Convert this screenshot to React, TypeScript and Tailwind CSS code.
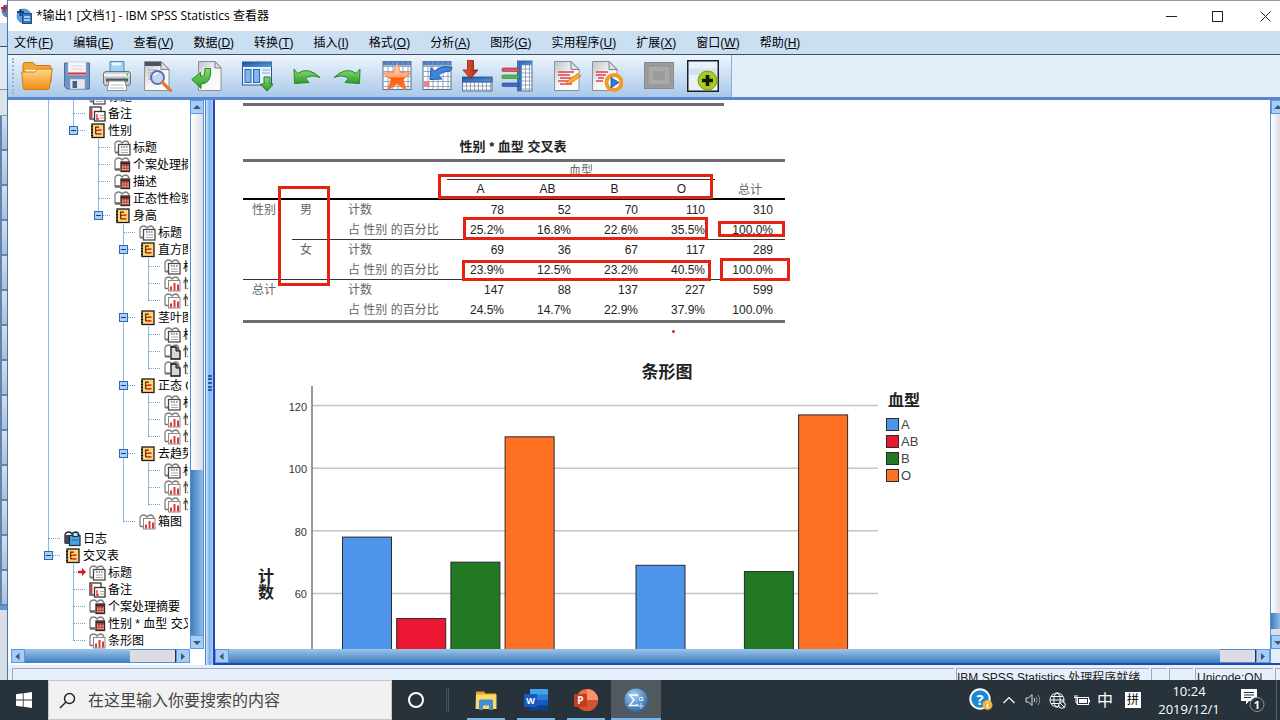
import type { ReactNode } from "react";

const UI_FONT = "font-['Liberation_Sans','Noto_Sans_CJK_SC',sans-serif]";
const WIN_FONT = "font-['Open_Sans','Noto_Sans_CJK_SC',sans-serif]";

const MENUS: [string, string][] = [
  ["文件", "F"],
  ["编辑", "E"],
  ["查看", "V"],
  ["数据", "D"],
  ["转换", "T"],
  ["插入", "I"],
  ["格式", "O"],
  ["分析", "A"],
  ["图形", "G"],
  ["实用程序", "U"],
  ["扩展", "X"],
  ["窗口", "W"],
  ["帮助", "H"],
];

/* ---------- toolbar icons ---------- */

function Gradients() {
  return (
    <svg width="0" height="0" className="absolute" aria-hidden="true">
      <defs>
        <linearGradient id="gFolder" x1="0" y1="0" x2="0" y2="1">
          <stop offset="0" stopColor="#ffd98a" />
          <stop offset="1" stopColor="#f08c14" />
        </linearGradient>
        <linearGradient id="gPaper" x1="0" y1="0" x2="1" y2="1">
          <stop offset="0" stopColor="#bfc3c8" />
          <stop offset="0.5" stopColor="#f4f5f6" />
          <stop offset="1" stopColor="#ffffff" />
        </linearGradient>
        <linearGradient id="gGreen" x1="0" y1="0" x2="0" y2="1">
          <stop offset="0" stopColor="#8fdc70" />
          <stop offset="1" stopColor="#2c9a2a" />
        </linearGradient>
        <linearGradient id="gBlue" x1="0" y1="0" x2="1" y2="1">
          <stop offset="0" stopColor="#1c4f9c" />
          <stop offset="1" stopColor="#5a9fe0" />
        </linearGradient>
        <linearGradient id="gStar" x1="0" y1="0" x2="0" y2="1">
          <stop offset="0" stopColor="#ffe9d8" />
          <stop offset="0.5" stopColor="#ffa468" />
          <stop offset="0.55" stopColor="#ff5a0a" />
          <stop offset="1" stopColor="#ff7a30" />
        </linearGradient>
        <linearGradient id="gRed" x1="0" y1="0" x2="1" y2="0">
          <stop offset="0" stopColor="#e06048" />
          <stop offset="1" stopColor="#b02410" />
        </linearGradient>
        <radialGradient id="gSpss" cx="0.4" cy="0.3" r="0.7">
          <stop offset="0" stopColor="#a9d0f2" />
          <stop offset="1" stopColor="#2f6fb4" />
        </radialGradient>
      </defs>
    </svg>
  );
}

function Icon({ children }: { children: ReactNode }) {
  return (
    <svg viewBox="0 0 32 32" className="h-8 w-8" aria-hidden="true">
      {children}
    </svg>
  );
}

function Grid({ x, y, w, h, step = 5, head = true }: { x: number; y: number; w: number; h: number; step?: number; head?: boolean }) {
  const cols = Array.from({ length: Math.floor((w - 1) / step) }, (_, i) => x + (i + 1) * step);
  const rows = Array.from({ length: Math.floor((h - 1) / step) }, (_, i) => y + (i + 1) * step);
  return (
    <g>
      <rect x={x} y={y} width={w} height={h} fill="#fff" stroke="#5d6f8c" />
      {head && <rect x={x} y={y} width={w} height="4" fill="#4f7fc4" />}
      {cols.map((c) => (
        <path key={`c${c}`} d={`M${c} ${y}V${y + h}`} stroke="#8b9cba" strokeWidth="0.9" />
      ))}
      {rows.map((r) => (
        <path key={`r${r}`} d={`M${x} ${r}H${x + w}`} stroke="#8b9cba" strokeWidth="0.9" />
      ))}
    </g>
  );
}

function Paper() {
  return (
    <g>
      <path d="M3.500 1.500H20l8 8V30.500H3.500Z" fill="url(#gPaper)" stroke="#8d9298" />
      <path d="M20 1.500v8h8Z" fill="#dfe2e5" stroke="#7b8086" />
    </g>
  );
}

const OpenIcon = (
  <Icon>
    <path d="M2 4.500q0-2 2-2h8l3 3h13q2 0 2 2V22H2Z" fill="#f5a632" stroke="#c9780f" />
    <path d="M4 9.500h25l-1 12H4Z" fill="#fff3d6" stroke="#dda64a" strokeWidth="0.8" />
    <path d="M.8 12h13l3-3h14.500l-3 19q-.3 1.500-2 1.500H4q-1.600 0-1.800-1.500Z" fill="url(#gFolder)" stroke="#d07d10" />
  </Icon>
);
const SaveIcon = (
  <Icon>
    <path d="M3.500 3h25v26H6l-2.500-2.500Z" fill="#6a93c8" stroke="#4a6fa5" />
    <rect x="7" y="2" width="18" height="13" fill="#f6f6f8" stroke="#b9bfca" strokeWidth="0.6" />
    <path d="M7 13.500h18" stroke="#e02a3c" strokeWidth="2" />
    <path d="M10 6h12M10 9h12" stroke="#d3d5da" />
    <rect x="9" y="19" width="15" height="10" fill="#e4e6ea" stroke="#9aa5b8" strokeWidth="0.6" />
    <rect x="11.500" y="21" width="4.500" height="7" fill="#3f5f92" />
  </Icon>
);
const PrintIcon = (
  <Icon>
    <path d="M9 13V1.500h14V13Z" fill="#9fd4f5" stroke="#4d8dbb" />
    <path d="M11 4h9" stroke="#e8f6ff" strokeWidth="3" />
    <rect x="2.500" y="11.500" width="27" height="14" rx="2.500" fill="#c6c8cb" stroke="#6f7377" />
    <path d="M3 15h26" stroke="#f5f5f5" strokeWidth="2.500" />
    <path d="M5 20h22" stroke="#55595e" strokeWidth="3" />
    <path d="M8 21h16l2 9.500H6Z" fill="#fff" stroke="#8a8e92" />
    <path d="M9.500 25h13M9 28h14" stroke="#b9bcc0" />
    <circle cx="26.500" cy="14.500" r="1" fill="#3fae3a" />
  </Icon>
);
const PreviewIcon = (
  <Icon>
    <Paper />
    <rect x="4" y="2" width="16" height="4" fill="#4a5360" />
    <path d="M7 10h9M7 13h6M7 16h5M7 19h5" stroke="#a8adb3" />
    <circle cx="16.500" cy="17.500" r="6.500" fill="#bcd0f0" fillOpacity="0.85" stroke="#5b74b0" strokeWidth="2" />
    <path d="M13 16q1-3 4-3" stroke="#fff" strokeWidth="1.500" fill="none" />
    <path d="M21.500 22.500l8 8" stroke="#e07b3a" strokeWidth="3.200" strokeLinecap="round" />
  </Icon>
);
const RecallIcon = (
  <Icon>
    <path d="M7.500 1.500H24l6 6.500V30.500H7.500Z" fill="url(#gPaper)" stroke="#8d9298" />
    <path d="M24 1.500V8h6Z" fill="#dfe2e5" stroke="#7b8086" />
    <path d="M.8 19.500L9.500 12.500v4q5 0 4.500-8h5.500q1.500 15-9.500 15.500v4.500Z" fill="url(#gGreen)" stroke="#1f8a2c" strokeLinejoin="round" />
  </Icon>
);
const DialogIcon = (
  <Icon>
    <rect x="1.500" y="2" width="29" height="23" fill="#e6f1fc" stroke="#2a5593" />
    <rect x="1.500" y="2" width="29" height="5" fill="url(#gBlue)" />
    <rect x="4" y="9.500" width="6" height="13" fill="#7fb6ee" stroke="#2d66b0" />
    <rect x="12.500" y="9.500" width="6" height="13" fill="#7fb6ee" stroke="#2d66b0" />
    <path d="M21 10h8M21 13h8" stroke="#90add0" />
    <path d="M23 17h6v7h3.500L26 31l-6.500-7H23Z" fill="url(#gGreen)" stroke="#1f7a22" strokeLinejoin="round" />
  </Icon>
);
const UndoIcon = (
  <Icon>
    <path d="M3 9l3.500 4.500Q17 6 29 17.500 20 14 14.500 18.500l3.500 4L3.500 23.500Z" fill="url(#gGreen)" stroke="#238a23" strokeLinejoin="round" />
  </Icon>
);
const RedoIcon = (
  <Icon>
    <path d="M29 9l-3.500 4.500Q15 6 3 17.500 12 14 17.500 18.500l-3.500 4 14.500 1Z" fill="url(#gGreen)" stroke="#238a23" strokeLinejoin="round" />
  </Icon>
);
const GotoCaseIcon = (
  <Icon>
    <Grid x={2} y={1.5} w={28} h={28} />
    <path d="M16 3l3.600 9.500 10.400.5-8 6.500 3.500 11L16 24l-9.500 6.500L10 19.500 2 13l10.400-.5Z" fill="url(#gStar)" stroke="#f07a35" strokeWidth="0.8" />
  </Icon>
);
const GotoVarIcon = (
  <Icon>
    <Grid x={2} y={1.5} w={28} h={28} />
    <rect x="2.500" y="21" width="6" height="5" fill="#f0808c" />
    <path d="M9 19.500L10 7.500l3.500 3.500Q22 4.500 31 7.500 31 11 26 11.500q-5 0-8.500 4l3.500 3.500Z" fill="#3f86d8" stroke="#1d59a8" strokeLinejoin="round" />
  </Icon>
);
const InsertCaseIcon = (
  <Icon>
    <Grid x={1.5} y={18} w={29.5} h={13} step={4} head={false} />
    <rect x="1.500" y="17" width="29.500" height="5" fill="url(#gBlue)" stroke="#234f92" strokeWidth="0.8" />
    <path d="M6.500 0h6v10h4.500L9.500 18.500 2 10h4.500Z" fill="url(#gRed)" stroke="#8a1c0c" strokeWidth="0.8" />
  </Icon>
);
const InsertVarIcon = (
  <Icon>
    <Grid x={16.500} y={1} w={14.500} h={30} step={4} head={false} />
    <rect x="16.500" y="1" width="14.500" height="4" fill="url(#gBlue)" />
    <rect x="16" y="1" width="4.500" height="30" fill="#3674bf" />
    <rect x="1" y="8" width="17" height="3.500" rx="1" fill="#e05561" stroke="#a32833" strokeWidth="0.6" />
    <rect x="1" y="15" width="17" height="3.500" rx="1" fill="#54b848" stroke="#2b7f25" strokeWidth="0.6" />
    <rect x="1" y="23" width="17" height="3.500" rx="1" fill="#4567cc" stroke="#263f96" strokeWidth="0.6" />
  </Icon>
);
const SyntaxIcon = (
  <Icon>
    <Paper />
    <path d="M7 12h16M7 15h12M9 18h12M7 21h15M9 24h12" stroke="#e2414a" strokeWidth="1.300" />
    <path d="M27 13.500l3 2.500-10 7-5 1 2.500-4Z" fill="#ffa733" stroke="#d46f14" strokeWidth="0.8" />
  </Icon>
);
const RunIcon = (
  <Icon>
    <g transform="translate(-2 0)">
      <Paper />
      <path d="M7 12h12M7 15h10M9 18h6M7 21h7" stroke="#e2414a" strokeWidth="1.300" />
    </g>
    <circle cx="23" cy="22.500" r="7.500" fill="#fff" stroke="#f29a22" strokeWidth="4" />
    <path d="M20 17.500l8 5-8 5.500Z" fill="#2f7fd0" stroke="#174f94" strokeWidth="0.8" />
  </Icon>
);
const DisabledIcon = (
  <Icon>
    <rect x="1.500" y="2.500" width="29" height="26" fill="#9c9c9c" stroke="#8a8a8a" />
    <rect x="5" y="6" width="22" height="19" fill="#a9a9a9" stroke="#8f8f8f" />
    <rect x="10" y="11" width="12" height="9" fill="#9c9c9c" />
  </Icon>
);
const DesignateIcon = (
  <Icon>
    <rect x="0.750" y="0.750" width="30.500" height="30.500" fill="#eaf2f9" stroke="#16222e" strokeWidth="1.500" />
    <path d="M2 8.500h28V15H2Z" fill="#d3e3f1" />
    <circle cx="20.500" cy="20.500" r="9.500" fill="#a9cb1e" stroke="#7e9a13" />
    <path d="M20.500 15v11M15 20.500h11" stroke="#151b0a" strokeWidth="3.600" />
  </Icon>
);

const TOOL_GROUPS: { label: string; icon: ReactNode }[][] = [
  [
    { label: "打开", icon: OpenIcon },
    { label: "保存", icon: SaveIcon },
    { label: "打印", icon: PrintIcon },
    { label: "打印预览", icon: PreviewIcon },
  ],
  [{ label: "导出", icon: RecallIcon }],
  [{ label: "重新调用对话框", icon: DialogIcon }],
  [
    { label: "撤销", icon: UndoIcon },
    { label: "重做", icon: RedoIcon },
  ],
  [
    { label: "转到数据", icon: GotoCaseIcon },
    { label: "转到个案", icon: GotoVarIcon },
    { label: "转到变量", icon: InsertCaseIcon },
    { label: "变量", icon: InsertVarIcon },
  ],
  [
    { label: "创建自动脚本", icon: SyntaxIcon },
    { label: "运行脚本", icon: RunIcon },
  ],
];

/* ---------- outline tree ---------- */

type NodeKind = "book" | "title" | "notes" | "table" | "chart" | "text" | "log";
type OutlineRow = { depth: number; kind: NodeKind; label: string; current?: boolean };

const OUTLINE: OutlineRow[] = [
  { depth: 1, kind: "title", label: "标题" },
  { depth: 1, kind: "notes", label: "备注" },
  { depth: 1, kind: "book", label: "性别" },
  { depth: 2, kind: "title", label: "标题" },
  { depth: 2, kind: "table", label: "个案处理摘要" },
  { depth: 2, kind: "table", label: "描述" },
  { depth: 2, kind: "table", label: "正态性检验" },
  { depth: 2, kind: "book", label: "身高" },
  { depth: 3, kind: "title", label: "标题" },
  { depth: 3, kind: "book", label: "直方图" },
  { depth: 4, kind: "title", label: "标题" },
  { depth: 4, kind: "chart", label: "性别= 男" },
  { depth: 4, kind: "chart", label: "性别= 女" },
  { depth: 3, kind: "book", label: "茎叶图" },
  { depth: 4, kind: "title", label: "标题" },
  { depth: 4, kind: "text", label: "性别= 男" },
  { depth: 4, kind: "text", label: "性别= 女" },
  { depth: 3, kind: "book", label: "正态 Q-Q 图" },
  { depth: 4, kind: "title", label: "标题" },
  { depth: 4, kind: "chart", label: "性别= 男" },
  { depth: 4, kind: "chart", label: "性别= 女" },
  { depth: 3, kind: "book", label: "去趋势正态 Q-Q 图" },
  { depth: 4, kind: "title", label: "标题" },
  { depth: 4, kind: "chart", label: "性别= 男" },
  { depth: 4, kind: "chart", label: "性别= 女" },
  { depth: 3, kind: "chart", label: "箱图" },
  { depth: 0, kind: "log", label: "日志" },
  { depth: 0, kind: "book", label: "交叉表" },
  { depth: 1, kind: "title", label: "标题", current: true },
  { depth: 1, kind: "notes", label: "备注" },
  { depth: 1, kind: "table", label: "个案处理摘要" },
  { depth: 1, kind: "table", label: "性别 * 血型 交叉表" },
  { depth: 1, kind: "chart", label: "条形图" },
];

// true when another row at this depth follows before the branch closes
function continues(index: number, depth: number) {
  for (let i = index + 1; i < OUTLINE.length; i++) {
    if (OUTLINE[i].depth === depth) return true;
    if (OUTLINE[i].depth < depth) return false;
  }
  return false;
}

function BackPages({ stroke = "#808080" }: { stroke?: string }) {
  return (
    <path d="M1 12.500V3.500Q2 1 4.500 1 7 1 8 3 9.500 1 12 1q2.500 .5 3 3.500" fill="#fff" stroke={stroke} strokeWidth="1.300" />
  );
}

function NodeIcon({ kind }: { kind: NodeKind }) {
  return (
    <svg viewBox="0 0 17 16" className="h-4 w-[17px]" aria-hidden="true">
      {kind === "book" && (
        <g>
          <rect x="3" y="1" width="12" height="13.500" fill="#ffd777" stroke="#1a1a1a" strokeWidth="1.300" />
          <path d="M2 3.500h2M2 6.500h2M2 9.500h2M2 12.500h2" stroke="#111" strokeWidth="1.400" />
          <path d="M6.700 4v7M6 4.200h4M6.700 7.500h2M6.700 10.800h2" stroke="#5b2408" strokeWidth="1.200" />
          <path d="M8.500 7.200h4M8.500 10.800h4" stroke="#f0301c" strokeWidth="1.800" />
        </g>
      )}
      {kind === "title" && (
        <g>
          <BackPages />
          <path d="M1 12.500h4" stroke="#777" strokeWidth="2" />
          <rect x="4.500" y="4.500" width="11.500" height="10.500" fill="#fff" stroke="#4a4a4a" strokeWidth="1.300" />
          <path d="M7 7h7" stroke="#777" strokeDasharray="1.500 1" strokeWidth="1.400" />
          <path d="M7 10h7M7 12.500h7" stroke="#aaa" />
        </g>
      )}
      {kind === "notes" && (
        <g>
          <rect x="1" y="1" width="11" height="12" fill="#fff" stroke="#333" strokeWidth="1.300" />
          <path d="M2.500 2v10" stroke="#d33" strokeWidth="1.800" />
          <rect x="5.500" y="5.500" width="10.500" height="9.500" fill="#fff" stroke="#333" strokeWidth="1.300" />
          <path d="M8 8v5M7 13h3" stroke="#d33" strokeWidth="1.300" />
          <path d="M11 9.500h4M11 12h4" stroke="#aaa" />
        </g>
      )}
      {kind === "table" && (
        <g>
          <BackPages />
          <path d="M1 12.500h5" stroke="#666" strokeWidth="2.500" />
          <rect x="7" y="5" width="8.500" height="9.500" fill="#e8615a" stroke="#2a2a2a" strokeWidth="1.300" />
          <path d="M7 6.500h8.500" stroke="#2a2a2a" strokeWidth="1.500" />
          <path d="M10 7v8M12.800 7v8" stroke="#5c1f1c" strokeWidth="0.800" />
          <path d="M8 10h7M8 12.500h7" stroke="#f3c6c2" strokeWidth="0.600" />
        </g>
      )}
      {kind === "chart" && (
        <g>
          <BackPages />
          <path d="M1 12.500h4" stroke="#777" strokeWidth="1.500" />
          <rect x="4.500" y="4.500" width="11.500" height="10.500" fill="#fff" stroke="#888" />
          <path d="M7 14.500v-4M10.500 14.500V7M14 14.500v-6" stroke="#d93b3b" strokeWidth="2" />
        </g>
      )}
      {kind === "text" && (
        <g>
          <BackPages />
          <path d="M1 12.500h5" stroke="#666" strokeWidth="2" />
          <path d="M7 3h5l4 4v8H7Z" fill="#d8d8d8" stroke="#111" strokeWidth="1.300" />
          <path d="M12 3v4h4" fill="#888" stroke="#111" />
        </g>
      )}
      {kind === "log" && (
        <g>
          <BackPages stroke="#222" />
          <rect x="1" y="4" width="4" height="9" fill="#445" />
          <rect x="5.500" y="4.500" width="10.500" height="10" fill="#4aa3dd" stroke="#12304a" strokeWidth="1.200" />
          <rect x="9" y="1.500" width="5" height="4" fill="#bfe0f5" stroke="#12304a" />
          <path d="M8 9h6" stroke="#1c64a0" />
        </g>
      )}
    </svg>
  );
}

function TreeRow({ row, index }: { row: OutlineRow; index: number }) {
  return (
    <li className="flex h-[17px] items-center whitespace-nowrap">
      {Array.from({ length: row.depth }, (_, d) => (
        <span key={d} className="flex h-full w-[25px] shrink-0 justify-center">
          {continues(index, d) && <span className="w-px bg-[#8cb8e8]" />}
        </span>
      ))}
      <span className="relative flex h-full w-[25px] shrink-0 items-center justify-center">
        <span className={`absolute left-3 top-0 w-px bg-[#8cb8e8] ${continues(index, row.depth) ? "h-full" : "h-1/2"}`} />
        <span className="absolute left-3 top-2 w-3 border-t border-dotted border-[#6ea3dc]" />
        {row.kind === "book" && (
          <button
            aria-label={`折叠 ${row.label}`}
            className="relative flex h-[9px] w-[9px] items-center justify-center border border-[#2f68ae] bg-[#a9cffa]"
          >
            <span className="h-px w-[5px] bg-[#123f80]" />
          </button>
        )}
        {row.current && (
          <svg viewBox="0 0 8 8" className="absolute left-[17px] top-1 h-2 w-2" aria-hidden="true">
            <path d="M0 2.800h4V0L8 4 4 8V5.200H0Z" fill="#e8101c" />
          </svg>
        )}
      </span>
      <span className="flex w-[22px] shrink-0 justify-center">
        <NodeIcon kind={row.kind} />
      </span>
      <span className="text-xs leading-4 text-black">{row.label}</span>
    </li>
  );
}

/* ---------- scroll bars ---------- */

function ArrowButton({ dir, label }: { dir: "up" | "down" | "left" | "right"; label: string }) {
  const paths = { up: "M1 6L5 2l4 4Z", down: "M1 3h8L5 7Z", left: "M6.500 1v7l-4-3.500Z", right: "M3 1v7l4-3.500Z" };
  return (
    <button
      aria-label={label}
      className="flex h-[14px] w-[14px] shrink-0 items-center justify-center border border-[#5b9ade] bg-[#a5cdf8]"
    >
      <svg viewBox="0 0 10 9" className="h-[9px] w-[10px] shrink-0" aria-hidden="true">
        <path d={paths[dir]} fill="#44546a" />
      </svg>
    </button>
  );
}

function HScroll({ children }: { children: ReactNode }) {
  return (
    <div className="flex h-[14px] shrink-0 border-y border-[#4f8fd4] bg-[#dddce4]">
      <div className="-my-px flex min-w-0 flex-1">
        <ArrowButton dir="left" label="向左滚动" />
        {children}
        <ArrowButton dir="right" label="向右滚动" />
      </div>
    </div>
  );
}

function OutlinePane() {
  return (
    <nav aria-label="大纲" className="flex w-[198px] shrink-0 border-r border-[#4b86c8] bg-white pr-px">
      <div className="flex min-w-0 flex-1 flex-col">
        <div className="min-h-0 flex-1 overflow-hidden pl-7 pr-[2px]">
          <ul className="-mt-3 overflow-hidden">
            {OUTLINE.map((row, i) => (
              <TreeRow key={i} row={row} index={i} />
            ))}
          </ul>
        </div>
        <div className="shrink-0 pb-[2px] pl-[3px]">
          <HScroll>
            <div className="h-full grow-[7] bg-linear-to-b from-[#9cc4ea] to-[#3c7dbd]" />
            <div className="h-full grow-[3] border-y border-r border-[#4f8fd4] border-r-[#24344c]" />
          </HScroll>
        </div>
      </div>
      <div className="mb-4 flex w-[14px] shrink-0 flex-col border-x border-[#4f8fd4]">
        <div className="-mx-px">
          <ArrowButton dir="up" label="向上滚动" />
        </div>
        <div className="grow-[355] bg-linear-to-r from-white to-[#dedde4]" />
        <div className="grow-[164] bg-linear-to-r from-[#3c7dbd] to-[#8fbbe6]" />
        <div className="-mx-px">
          <ArrowButton dir="down" label="向下滚动" />
        </div>
      </div>
    </nav>
  );
}

/* ---------- output document ---------- */

const GROUPS = [
  { label: "男", counts: [78, 52, 70, 110, 310], pct: ["25.2%", "16.8%", "22.6%", "35.5%", "100.0%"] },
  { label: "女", counts: [69, 36, 67, 117, 289], pct: ["23.9%", "12.5%", "23.2%", "40.5%", "100.0%"] },
];
const TOTAL = { counts: [147, 88, 137, 227, 599], pct: ["24.5%", "14.7%", "22.9%", "37.9%", "100.0%"] };
const BLOOD = ["A", "AB", "B", "O"];
const COLORS = ["#4f94eb", "#eb1733", "#237823", "#ff7124"];

function ValueCells({ values, line }: { values: (string | number)[]; line?: boolean }) {
  return (
    <>
      {values.map((v, i) => (
        <td key={i} className={`p-0 text-right text-[#222] ${i === 4 ? "pr-3" : "pr-[10px]"} ${line ? "border-b border-[#333]" : ""}`}>
          {v}
        </td>
      ))}
    </>
  );
}

function LabelCell({ children, line }: { children: ReactNode; line?: boolean }) {
  return (
    <th scope="row" className={`p-0 pl-[6px] text-left font-normal text-[#666] ${line ? "border-b border-[#333]" : ""}`}>
      {children}
    </th>
  );
}

function CrossTable() {
  return (
    <div className="relative w-[542px]">
      <table className="w-full table-fixed border-separate border-spacing-0 border-y-3 border-[#6e6e6e] text-xs leading-4">
        <colgroup>
          <col className="w-[49px]" />
          <col className="w-[50px]" />
          <col className="w-[105px]" />
          <col className="w-[67px]" />
          <col className="w-[67px]" />
          <col className="w-[67px]" />
          <col className="w-[67px]" />
          <col className="w-[70px]" />
        </colgroup>
        <thead>
          <tr className="h-[18px]">
            <td colSpan={3} rowSpan={2} className="border-b-2 border-black p-0" />
            <th colSpan={4} className="border-b border-[#333] p-0 font-normal text-[#666]">
              血型
            </th>
            <th rowSpan={2} className="border-b-2 border-black p-0 align-bottom font-normal text-[#666]">
              总计
            </th>
          </tr>
          <tr className="h-5">
            {BLOOD.map((b) => (
              <th key={b} scope="col" className="border-b-2 border-black p-0 font-normal text-[#222]">
                {b}
              </th>
            ))}
          </tr>
        </thead>
        {GROUPS.map((g, i) => (
          <tbody key={g.label}>
            <tr className="h-5">
              <td className="p-0 text-right text-[#666] pr-4">{i === 0 && "性别"}</td>
              <th scope="rowgroup" rowSpan={2} className="border-b border-[#333] p-0 pl-2 pt-[2px] text-left align-top font-normal text-[#666]">
                {g.label}
              </th>
              <LabelCell>计数</LabelCell>
              <ValueCells values={g.counts} />
            </tr>
            <tr className="h-5">
              <td className={`p-0 ${i === 1 ? "border-b border-[#333]" : ""}`} />
              <LabelCell line>占 性别 的百分比</LabelCell>
              <ValueCells values={g.pct} line />
            </tr>
          </tbody>
        ))}
        <tbody>
          <tr className="h-5">
            <th colSpan={2} scope="rowgroup" className="p-0 pl-[9px] text-left font-normal text-[#666]">
              总计
            </th>
            <LabelCell>计数</LabelCell>
            <ValueCells values={TOTAL.counts} />
          </tr>
          <tr className="h-5">
            <td colSpan={2} className="p-0" />
            <LabelCell>占 性别 的百分比</LabelCell>
            <ValueCells values={TOTAL.pct} />
          </tr>
        </tbody>
      </table>
      {/* red marker boxes */}
      <span className="absolute left-[35px] top-[27px] h-[100px] w-[52px] border-3 border-[#e5220f]" />
      <span className="absolute left-[195px] top-[15px] h-[25px] w-[275px] border-3 border-[#e5220f]" />
      <span className="absolute left-[220px] top-[58px] h-[23px] w-[245px] border-3 border-[#e5220f]" />
      <span className="absolute left-[219px] top-[101px] h-[21px] w-[249px] border-3 border-[#e5220f]" />
      <span className="absolute left-[475px] top-[62px] h-4 w-[67px] border-3 border-[#e5220f]" />
      <span className="absolute left-[477px] top-[99px] h-[23px] w-[70px] border-3 border-[#e5220f]" />
      <span className="absolute left-[429px] top-[171px] h-[3px] w-[3px] rounded-full bg-[#e5220f]" />
    </div>
  );
}

function BarChart() {
  // 120 sits at y=20.5, 20 units are 62.7px
  const y = (v: number) => 20.5 + (120 - v) * 3.133;
  return (
    <figure className="w-[848px]">
      <figcaption className="h-6 text-center text-[17px] leading-6 font-bold text-[#222]">条形图</figcaption>
      <div className="flex">
        <span className="ml-[15px] w-4 self-center text-base leading-4 font-bold text-[#222]">计数</span>
        <svg viewBox="0 0 610 400" className="h-[400px] w-[610px] shrink-0" role="img" aria-label="条形图">
          {[120, 100, 80, 60, 40, 20, 0].map((t) => (
            <g key={t}>
              <path d={`M38 ${y(t)}H604`} stroke="#c4c4c4" strokeWidth="1.500" />
              <text x="33" y={y(t) + 5} textAnchor="end" fontSize="11" fill="#333">
                {t}
              </text>
            </g>
          ))}
          <path d="M38 1V397" stroke="#777" strokeWidth="1.500" />
          {GROUPS.map((g, gi) =>
            BLOOD.map((b, i) => (
              <rect
                key={g.label + b}
                x={68.5 + gi * 293.500 + i * 54.2}
                y={y(g.counts[i])}
                width="49"
                height={y(0) - y(g.counts[i])}
                fill={COLORS[i]}
                stroke="#2b2b2b"
              />
            ))
          )}
        </svg>
        <div className="ml-[2px] pt-1">
          <div className="pl-[2px] text-base leading-6 font-bold text-[#222]">血型</div>
          <ul className="pt-[3px]">
            {BLOOD.map((b, i) => (
              <li key={b} className="flex h-[17px] items-center gap-[2px] text-[13px] leading-4 text-[#444]">
                <span className="h-[13px] w-[13px] border border-[#2b2b2b]" style={{ backgroundColor: COLORS[i] }} />
                {b}
              </li>
            ))}
          </ul>
        </div>
      </div>
    </figure>
  );
}

function Viewer() {
  return (
    <main className="flex min-w-0 flex-1 border-b-2 border-l-2 border-[#2446b4] bg-white">
      <div className="flex min-w-0 flex-1 flex-col">
        <div className="min-h-0 flex-1 overflow-hidden pl-7 pt-[3px]">
          <div className="h-[3px] w-[481px] bg-[#6e6e6e]" />
          <h1 className="mt-[31px] w-[540px] text-center text-[13px] leading-5 font-bold text-[#222]">性别 * 血型 交叉表</h1>
          <div className="pt-[2px]">
            <CrossTable />
          </div>
          <div className="pt-[38px]">
            <BarChart />
          </div>
        </div>
        <HScroll>
          <div className="h-full flex-1 bg-linear-to-b from-[#9cc4ea] to-[#3c7dbd]" />
          <div className="h-full w-9 border-y border-r border-[#4f8fd4] border-r-[#24344c]" />
        </HScroll>
      </div>
      <div className="flex w-[10px] shrink-0 flex-col overflow-hidden border-l border-[#4f8fd4] bg-[#e2effb] pb-[14px]">
        <ArrowButton dir="up" label="向上滚动" />
        <div className="flex-1 bg-linear-to-r from-white to-[#dedde4]" />
        <div className="h-4 bg-linear-to-r from-[#3c7dbd] to-[#8fbbe6]" />
        <div className="h-[6px] bg-[#dedde4]" />
        <ArrowButton dir="down" label="向下滚动" />
      </div>
    </main>
  );
}

/* ---------- window chrome ---------- */

function TitleBar() {
  return (
    <header className={`flex h-[31px] shrink-0 items-center border-t border-[#999] bg-white pl-2 ${WIN_FONT}`}>
      <svg viewBox="0 0 16 16" className="h-4 w-4" aria-hidden="true">
        <circle cx="8" cy="8" r="7.500" fill="#5a9bd8" />
        <path d="M1 4h7M4.500 1v7" stroke="#16407c" strokeWidth="2" />
        <rect x="6.500" y="5.500" width="9" height="10" fill="#3577bd" stroke="#1b4f8f" />
        <path d="M8 9h6M8 12h6" stroke="#d4e8fb" strokeWidth="1.300" />
      </svg>
      <span className="ml-1 flex-1 text-xs leading-5 text-black">*输出1 [文档1] - IBM SPSS Statistics 查看器</span>
      <button aria-label="最小化" className="flex h-full w-[46px] items-center justify-center">
        <svg viewBox="0 0 11 11" className="h-[11px] w-[11px]" stroke="#222" fill="none">
          <path d="M0 5.500h11" />
        </svg>
      </button>
      <button aria-label="最大化" className="flex h-full w-[46px] items-center justify-center">
        <svg viewBox="0 0 11 11" className="h-[11px] w-[11px]" stroke="#222" fill="none">
          <rect x="0.500" y="0.500" width="10" height="10" />
        </svg>
      </button>
      <button aria-label="关闭" className="flex h-full w-10 items-center justify-center pl-[10px]">
        <svg viewBox="0 0 11 11" className="h-[11px] w-[11px]" stroke="#222" fill="none">
          <path d="M.5.5l10 10M10.500.5l-10 10" />
        </svg>
      </button>
    </header>
  );
}

function MenuBar() {
  return (
    <nav aria-label="菜单" className="flex h-6 shrink-0 items-center gap-5 border-b border-[#3f4f63] bg-[#cbdff3] pl-[6px]">
      {MENUS.map(([label, key]) => (
        <button key={key} className="text-xs leading-4 whitespace-nowrap text-black">
          {label}(<span className="underline">{key}</span>)
        </button>
      ))}
    </nav>
  );
}

function Toolbar() {
  return (
    <div className="flex h-[42px] shrink-0 bg-[#e2effb]">
      <div className="flex items-center gap-[10px] border-r border-[#8eacc9] bg-linear-to-b from-[#eef6fd] to-[#a9c8e8] pr-[6px]">
        <span className="-mr-[10px] ml-1 h-9 w-[5px] border-l-2 border-dotted border-[#9db4cc]" />
        {TOOL_GROUPS.map((group, i) => (
          <div key={i} className="flex">
            {group.map((t) => (
              <button key={t.label} aria-label={t.label} className="flex w-10 justify-center">
                {t.icon}
              </button>
            ))}
          </div>
        ))}
        <div className="flex">
          <button aria-label="选择最后的输出" disabled className="flex w-11 justify-center">
            {DisabledIcon}
          </button>
          <button aria-label="指定窗口" className="flex w-11 justify-center">
            {DesignateIcon}
          </button>
        </div>
      </div>
    </div>
  );
}

function StatusBar() {
  return (
    <footer className="flex h-[14px] shrink-0 gap-[2px] overflow-hidden bg-[#e6f0fc] pl-1 pt-[2px] text-xs leading-4 whitespace-nowrap text-[#222]">
      <div className="flex-1 border-l border-t border-[#a5a9b4]" />
      <div className="h-8 w-[193px] border-l border-t border-[#a5a9b4] pt-px">IBM SPSS Statistics 处理程序就绪</div>
      <div className="w-4 border-l border-t border-[#a5a9b4]" />
      <div className="w-6 border-l border-t border-[#a5a9b4]" />
      <div className="h-8 w-[78px] border-l border-t border-[#a5a9b4] pl-px pt-px">Unicode:ON</div>
      <div className="w-[5px] border-l border-t border-[#a5a9b4]" />
    </footer>
  );
}

// sliver of the data editor window behind
function BackWindow() {
  return (
    <div className="flex w-2 shrink-0 flex-col overflow-hidden border-r border-[#3f78b5] bg-[#c9d6e6]" aria-hidden="true">
      <div className="h-[23px] bg-white pt-1">
        <svg viewBox="0 0 7 14" className="h-[14px] w-[7px]">
          <circle cx="8" cy="7" r="6.500" fill="#5b86b8" />
          <path d="M1 4h6M4.500 1v7" stroke="#c0203a" strokeWidth="2" />
        </svg>
      </div>
      <div className="h-6 border-b border-[#3f4f63] bg-[#cbdff3]" />
      <div className="h-[42px] bg-[#dfe9f4]" />
      <div className="h-[27px] border-y border-[#8b95a5] bg-[#dde1ea]" />
      {Array.from({ length: 14 }, (_, i) => (
        <div key={i} className="h-[35px] shrink-0 border-b-2 border-l-2 border-[#6484ab] bg-linear-to-b from-[#d5e0ee] to-[#a9bfdb]" />
      ))}
      <div className="h-1 shrink-0 bg-[#5b9ad6]" />
      <div className="flex-1 bg-[#d9dde6]" />
    </div>
  );
}

/* ---------- taskbar ---------- */

function TaskButton({ label, active, children }: { label: string; active?: boolean; children: ReactNode }) {
  return (
    <button
      aria-label={label}
      className={`flex w-[50px] flex-col items-center justify-between px-[6px] pt-2 ${active ? "bg-[#50595f]" : ""}`}
    >
      <svg viewBox="0 0 24 24" className="h-6 w-6" aria-hidden="true">
        {children}
      </svg>
      <span className={`h-[2px] bg-[#76b5e8] ${active ? "w-[50px]" : "w-full"}`} />
    </button>
  );
}

function Taskbar() {
  return (
    <div className={`flex h-10 shrink-0 items-stretch bg-[#27323a] text-white ${WIN_FONT}`}>
      <button aria-label="开始" className="flex w-12 items-center justify-center">
        <svg viewBox="0 0 16 16" className="h-4 w-4" fill="#fff">
          <path d="M0 2.300l6.800-1v6.300H0ZM7.600 1.200L16 0v7.600H7.600ZM0 8.400h6.800v6.300L0 13.700ZM7.600 8.400H16V16l-8.400-1.200Z" />
        </svg>
      </button>
      <label className="flex w-[344px] items-center gap-3 border border-[#c6c6c6] bg-[#f1f1f1] pl-[10px]">
        <svg viewBox="0 0 17 17" className="h-[17px] w-[17px]" fill="none" stroke="#222" strokeWidth="1.400">
          <circle cx="10.500" cy="6.500" r="5" />
          <path d="M7 10l-6 6" />
        </svg>
        <input
          aria-label="搜索"
          placeholder="在这里输入你要搜索的内容"
          className="min-w-0 flex-1 bg-transparent text-base leading-6 outline-none placeholder:text-[#444]"
        />
      </label>
      <button aria-label="Cortana" className="flex w-12 items-center justify-center">
        <span className="h-4 w-4 rounded-full border-2 border-white" />
      </button>
      <span className="ml-[6px] mr-3 h-6 w-[3px] self-center border-x border-[#47525a]" />
      <TaskButton label="文件资源管理器">
        <path d="M2 3.500h8l1.500 2H22V20H2Z" fill="#e5a823" />
        <path d="M2 6.500h20.500V21H1.500Z" fill="#ffd869" />
        <path d="M5 13q0-1.500 1.500-1.500h11Q19 11.500 19 13v9h-4v-4.500H9V22H5Z" fill="#3f8fd0" />
      </TaskButton>
      <TaskButton label="Word">
        <rect x="6" y="1" width="18" height="6" fill="#41a5ee" />
        <rect x="6" y="6.500" width="18" height="5.500" fill="#2b7cd3" />
        <rect x="6" y="12" width="18" height="5.500" fill="#185abd" />
        <rect x="6" y="17.500" width="18" height="5" fill="#103f91" />
        <rect x="0" y="6" width="13" height="13" rx="1" fill="#185abd" />
        <text x="6.500" y="16" textAnchor="middle" fontSize="9" fontWeight="bold" fill="#fff">W</text>
      </TaskButton>
      <TaskButton label="PowerPoint">
        <circle cx="13" cy="12" r="11" fill="#ed6c47" />
        <path d="M13 1a11 11 0 0 1 11 11H13Z" fill="#ff8f6b" />
        <path d="M2 12h22a11 11 0 0 1-22 0Z" fill="#d35230" />
        <rect x="0" y="6" width="13" height="13" rx="1" fill="#c43e1c" />
        <text x="6.500" y="16" textAnchor="middle" fontSize="10" fontWeight="bold" fill="#fff">P</text>
      </TaskButton>
      <TaskButton label="IBM SPSS Statistics" active>
        <circle cx="12" cy="12" r="11.500" fill="url(#gSpss)" />
        <path d="M13.500 8.500V7H5.500l4.500 5-4.500 5.500h8V16" fill="none" stroke="#fff" strokeWidth="1.300" />
        <text x="14.500" y="13" fontSize="8" fill="#fff">α</text>
        <path d="M14.500 18h5" stroke="#fff" />
        <circle cx="17" cy="16" r="0.700" fill="#fff" />
        <circle cx="17" cy="20" r="0.700" fill="#fff" />
      </TaskButton>
      <div className="flex-1" />
      <div className="flex items-center">
        <button aria-label="帮助" className="flex w-8 justify-center">
          <svg viewBox="0 0 24 24" className="h-6 w-6">
            <circle cx="11" cy="11" r="9.700" fill="#1b86d6" stroke="#fff" strokeWidth="2" />
            <text x="11" y="16.500" textAnchor="middle" fontSize="15" fontWeight="bold" fill="#fff">?</text>
            <circle cx="18.500" cy="17" r="5" fill="#f0b23c" />
            <path d="M18.500 16v4M18.500 13.500v1.300" stroke="#fff" strokeWidth="1.500" />
          </svg>
        </button>
        <button aria-label="显示隐藏的图标" className="flex w-6 justify-center">
          <svg viewBox="0 0 12 8" className="h-2 w-3" fill="none" stroke="#fff" strokeWidth="1.200">
            <path d="M.5 7L6 1.500 11.500 7" />
          </svg>
        </button>
        <button aria-label="音量" className="flex w-6 justify-center">
          <svg viewBox="0 0 16 14" className="h-[14px] w-4" fill="none" stroke="#ddd">
            <path d="M1 5h2.500L7 1.500v11L3.500 9H1Z" />
            <path d="M9 5q1.500 2 0 4" />
            <path d="M11 3.500q2.500 3.500 0 7M13 2q3.500 5 0 10" stroke="#8a9298" />
          </svg>
        </button>
        <button aria-label="网络" className="flex w-6 justify-center">
          <svg viewBox="0 0 17 17" className="h-[17px] w-[17px]" fill="none" stroke="#fff">
            <circle cx="8" cy="8" r="7" />
            <ellipse cx="8" cy="8" rx="3.200" ry="7" />
            <path d="M1 8h14M2 4.500h12M2 11.500h8" />
            <circle cx="13" cy="13" r="3.300" fill="#27323a" />
            <path d="M10.700 10.700l4.600 4.600" />
          </svg>
        </button>
        <button aria-label="电池" className="flex w-6 justify-center">
          <svg viewBox="0 0 17 12" className="h-3 w-[17px]" fill="none" stroke="#fff">
            <rect x="4.500" y="3.500" width="11" height="7" />
            <rect x="6" y="5" width="8" height="4" fill="#fff" stroke="none" />
            <path d="M16.500 5.500v3M1 3.500h4M2 1v2M4 1v2M3 4v5h2" />
          </svg>
        </button>
        <button className="w-6 text-base leading-6">中</button>
        <button className="ml-2 h-4 w-4 bg-white text-xs leading-4 text-black">拼</button>
        <div className="ml-[9px] w-[78px] text-center text-[13px] leading-[18px]">
          <div>10:24</div>
          <div>2019/12/1</div>
        </div>
        <button aria-label="通知" className="mx-2 flex w-8 justify-center">
          <svg viewBox="0 0 26 26" className="h-[26px] w-[26px]">
            <path d="M2 2h16v12H10l-3 3.500V14H2Z" fill="#fff" />
            <path d="M5 5.500h10M5 8h10M5 10.500h7" stroke="#27323a" />
            <circle cx="18" cy="17.500" r="7" fill="#27323a" stroke="#8b949a" />
            <text x="18" y="21.500" textAnchor="middle" fontSize="11" fontWeight="bold" fill="#fff">1</text>
          </svg>
        </button>
        <span className="h-10 w-1 border-l border-[#5b666e]" />
      </div>
    </div>
  );
}

export default function App() {
  return (
    <div className={`flex h-screen flex-col overflow-hidden ${UI_FONT}`}>
      <Gradients />
      <div className="flex min-h-0 flex-1">
        <BackWindow />
        <div className="flex min-w-0 flex-1 flex-col bg-[#e2effb]">
          <TitleBar />
          <MenuBar />
          <Toolbar />
          <div className="flex min-h-0 flex-1 border-t-3 border-[#5a86cf] pb-px">
            <OutlinePane />
            <div className="flex w-[7px] shrink-0 flex-col items-center justify-center bg-linear-to-r from-[#d5e9fd] via-[#7fb2ec] to-[#a9cdf5]">
              <span className="h-4 w-1 border-x-2 border-dotted border-[#2a5fa8]" />
            </div>
            <Viewer />
          </div>
          <StatusBar />
        </div>
      </div>
      <Taskbar />
    </div>
  );
}
